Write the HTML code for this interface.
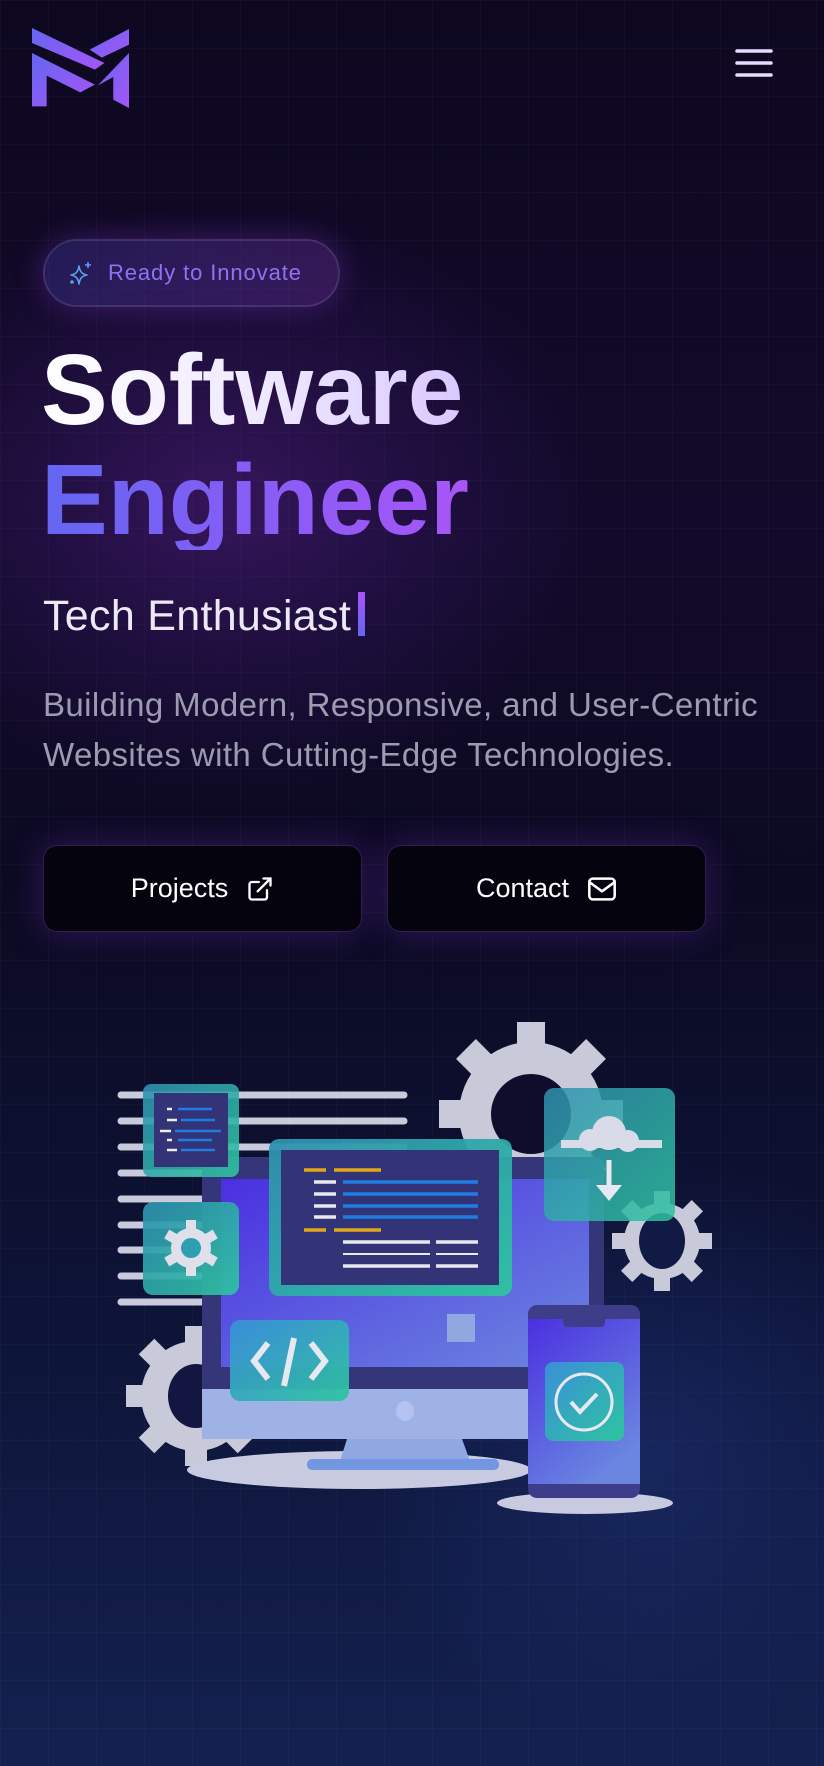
<!DOCTYPE html>
<html><head><meta charset="utf-8"><style>
*{margin:0;padding:0;box-sizing:border-box}
html,body{width:824px;height:1766px;overflow:hidden}
body{position:relative;font-family:"Liberation Sans",sans-serif;
background:linear-gradient(180deg,#0d0820 0%,#120a2a 30%,#0c0a22 50%,#0d1438 75%,#14214f 100%);}
.grid{position:absolute;inset:0;background-image:linear-gradient(rgba(255,255,255,0.022) 1px,transparent 1px),linear-gradient(90deg,rgba(255,255,255,0.022) 1px,transparent 1px);background-size:48px 48px;background-position:0 0}
.glow{position:absolute;left:-150px;top:200px;width:750px;height:600px;background:radial-gradient(ellipse at center,rgba(110,40,170,0.38) 0%,rgba(80,30,140,0.2) 40%,transparent 70%)}
.glow2{position:absolute;left:350px;top:1150px;width:600px;height:600px;background:radial-gradient(ellipse at center,rgba(40,70,160,0.3),transparent 70%)}
.abs{position:absolute;white-space:nowrap}
.badge{left:43px;top:239px;width:297px;height:68px;border-radius:34px;border:2px solid rgba(255,255,255,0.1);background:linear-gradient(90deg,rgba(70,60,170,0.35),rgba(110,50,160,0.35));box-shadow:0 0 30px rgba(140,60,220,0.35)}
.badge span{position:absolute;left:63px;top:19px;font-size:22px;letter-spacing:0.9px;color:#8f72f3}
.h1{font-weight:bold;font-size:100px;line-height:100px;letter-spacing:0px}
.sw{left:41px;top:340px;background:linear-gradient(90deg,#ffffff,#f0eaff 50%,#d9c8ff);-webkit-background-clip:text;background-clip:text;color:transparent}
.en{left:41px;top:450px;background:linear-gradient(90deg,#6366f1,#8b5cf6 55%,#a855f7);-webkit-background-clip:text;background-clip:text;color:transparent}
.tech{left:43px;top:595px;font-size:43px;line-height:42px;letter-spacing:0.3px;color:#ece8f5}
.cur{position:absolute;left:358px;top:592px;width:7px;height:44px;background:linear-gradient(#a855f7,#6366f1)}
.para{left:43px;top:680px;font-size:33px;line-height:50px;letter-spacing:0.4px;color:#9c9bb0}
.btn{position:absolute;top:845px;height:87px;width:319px;border-radius:14px;background:#05030d;border:1.5px solid rgba(120,90,200,0.35);box-shadow:0 0 35px rgba(120,50,200,0.35);color:#fff;font-size:27px;display:flex;align-items:center;justify-content:center;gap:18px}
</style></head><body>
<div class="grid"></div>
<div class="glow"></div>
<div class="glow2"></div>

<svg class="abs" style="left:32px;top:28px" width="97" height="80" viewBox="60 85 185 240" preserveAspectRatio="none">
<defs><linearGradient id="lg" x1="0" y1="0" x2="1" y2="1"><stop offset="0" stop-color="#6366f1"/><stop offset="1" stop-color="#a855f7"/></linearGradient></defs>
<polygon fill="url(#lg)" points="60,85 198,190 180,210 60,130"/>
<polygon fill="url(#lg)" points="170,150 245,88 245,135 193,174"/>
<polygon fill="url(#lg)" points="60,160 180,255 152,278 88,228 88,320 60,320"/>
<polygon fill="url(#lg)" points="185,258 245,160 245,325 215,300 215,232"/>
</svg>

<svg class="abs" style="left:735px;top:48px" width="38" height="32" viewBox="0 0 38 32">
<g stroke="#e6dcff" stroke-width="3.5" stroke-linecap="round"><line x1="2" y1="3" x2="36" y2="3"/><line x1="2" y1="15" x2="36" y2="15"/><line x1="2" y1="27" x2="36" y2="27"/></g></svg>

<div class="abs badge">
<svg style="position:absolute;left:24px;top:20px" width="24" height="26" viewBox="0 0 24 26" fill="none" stroke="#5aa0f0" stroke-width="1.6" stroke-linejoin="round">
<path d="M10 5 C11 11 13 13 18 14 C13 15 11 17 10 23 C9 17 7 15 2 14 C7 13 9 11 10 5Z"/>
<path d="M19 1v6M16 4h6"/><circle cx="3" cy="21" r="1" fill="#5aa0f0"/></svg>
<span>Ready to Innovate</span></div>

<div class="abs h1 sw">Software</div>
<div class="abs h1 en">Engineer</div>
<div class="abs tech">Tech Enthusiast</div>
<div class="cur"></div>
<div class="abs para">Building Modern, Responsive, and User-Centric<br>Websites with Cutting-Edge Technologies.</div>

<div class="btn" style="left:43px">Projects
<svg width="28" height="28" viewBox="0 0 24 24" fill="none" stroke="#fff" stroke-width="2" stroke-linecap="round" stroke-linejoin="round"><path d="M18 13v6a2 2 0 0 1-2 2H5a2 2 0 0 1-2-2V8a2 2 0 0 1 2-2h6"/><path d="M15 3h6v6"/><path d="M10 14L21 3"/></svg></div>
<div class="btn" style="left:387px">Contact
<svg width="30" height="26" viewBox="0 0 26 22" fill="none" stroke="#fff" stroke-width="2.2" stroke-linejoin="round"><rect x="2" y="2" width="22" height="18" rx="3"/><path d="M2 5l11 8 11-8"/></svg></div>

<svg class="abs" style="left:0;top:1000px" width="824" height="540" viewBox="0 1000 824 540">
<defs>
<linearGradient id="scr" x1="0" y1="0" x2="1" y2="1"><stop offset="0" stop-color="#4a30e0"/><stop offset="1" stop-color="#6c86e0"/></linearGradient>
<linearGradient id="teal" x1="0" y1="0" x2="1" y2="1"><stop offset="0" stop-color="#2f8fb0"/><stop offset="1" stop-color="#2ec4a0"/></linearGradient>
<linearGradient id="teal2" x1="0" y1="0" x2="1" y2="1"><stop offset="0" stop-color="#3a8fd8"/><stop offset="1" stop-color="#2ec4a0"/></linearGradient>
<linearGradient id="ph" x1="0" y1="0" x2="0.6" y2="1"><stop offset="0" stop-color="#4b30e0"/><stop offset="1" stop-color="#6a86e0"/></linearGradient>
</defs>
<g stroke="#c9cadb" stroke-width="7" stroke-linecap="round">
<line x1="121" y1="1095" x2="404" y2="1095"/><line x1="121" y1="1121" x2="404" y2="1121"/>
<line x1="121" y1="1147" x2="404" y2="1147"/><line x1="121" y1="1173" x2="220" y2="1173"/>
<line x1="121" y1="1199" x2="220" y2="1199"/><line x1="121" y1="1225" x2="220" y2="1225"/>
<line x1="121" y1="1250" x2="220" y2="1250"/><line x1="121" y1="1276" x2="220" y2="1276"/>
<line x1="121" y1="1302" x2="220" y2="1302"/></g>
<g fill="#c8c9d9">
<g transform="translate(531,1114)"><circle r="72"/>
<g><rect x="-14" y="-92" width="28" height="30"/><rect x="-14" y="-92" width="28" height="30" transform="rotate(45)"/><rect x="-14" y="-92" width="28" height="30" transform="rotate(90)"/><rect x="-14" y="-92" width="28" height="30" transform="rotate(135)"/><rect x="-14" y="-92" width="28" height="30" transform="rotate(180)"/><rect x="-14" y="-92" width="28" height="30" transform="rotate(225)"/><rect x="-14" y="-92" width="28" height="30" transform="rotate(270)"/><rect x="-14" y="-92" width="28" height="30" transform="rotate(315)"/></g>
<ellipse rx="40" ry="40" fill="#0f0c2c"/></g>
<g transform="translate(662,1241)"><circle r="38"/>
<g><rect x="-8" y="-50" width="16" height="16"/><rect x="-8" y="-50" width="16" height="16" transform="rotate(45)"/><rect x="-8" y="-50" width="16" height="16" transform="rotate(90)"/><rect x="-8" y="-50" width="16" height="16" transform="rotate(135)"/><rect x="-8" y="-50" width="16" height="16" transform="rotate(180)"/><rect x="-8" y="-50" width="16" height="16" transform="rotate(225)"/><rect x="-8" y="-50" width="16" height="16" transform="rotate(270)"/><rect x="-8" y="-50" width="16" height="16" transform="rotate(315)"/></g>
<ellipse rx="23" ry="28" fill="#111a44"/></g>
<g transform="translate(196,1396)"><circle r="55"/>
<g><rect x="-11" y="-70" width="22" height="20"/><rect x="-11" y="-70" width="22" height="20" transform="rotate(45)"/><rect x="-11" y="-70" width="22" height="20" transform="rotate(90)"/><rect x="-11" y="-70" width="22" height="20" transform="rotate(135)"/><rect x="-11" y="-70" width="22" height="20" transform="rotate(180)"/><rect x="-11" y="-70" width="22" height="20" transform="rotate(225)"/><rect x="-11" y="-70" width="22" height="20" transform="rotate(270)"/><rect x="-11" y="-70" width="22" height="20" transform="rotate(315)"/></g>
<ellipse rx="28" ry="32" fill="#121640"/></g>
</g>
<ellipse cx="359" cy="1470" rx="172" ry="19" fill="#c8cbe0"/>
<ellipse cx="585" cy="1503" rx="88" ry="11" fill="#c8cbe0"/>
<rect x="202" y="1157" width="402" height="282" rx="8" fill="#35357a"/>
<rect x="221" y="1179" width="368" height="188" fill="url(#scr)"/>
<rect x="202" y="1389" width="402" height="50" fill="#9fb2e6"/>
<ellipse cx="405" cy="1411" rx="9" ry="10" fill="#b3c2ee"/>
<polygon points="347,1439 462,1439 470,1461 340,1461" fill="#8fa8e2"/>
<rect x="307" y="1459" width="192" height="11" rx="5" fill="#7396e0"/>
<rect x="447" y="1314" width="28" height="28" fill="#8fa8e0"/>
<rect x="269" y="1139" width="243" height="157" rx="10" fill="url(#teal)" opacity="0.95"/>
<rect x="281" y="1150" width="218" height="135" fill="#333377"/>
<g stroke-width="3.5">
<line x1="304" y1="1170" x2="326" y2="1170" stroke="#e0a818"/><line x1="334" y1="1170" x2="381" y2="1170" stroke="#e0a818"/>
<line x1="314" y1="1182" x2="336" y2="1182" stroke="#e8e8f0"/><line x1="343" y1="1182" x2="478" y2="1182" stroke="#1e7ee0"/>
<line x1="314" y1="1194" x2="336" y2="1194" stroke="#e8e8f0"/><line x1="343" y1="1194" x2="478" y2="1194" stroke="#1e7ee0"/>
<line x1="314" y1="1206" x2="336" y2="1206" stroke="#e8e8f0"/><line x1="343" y1="1206" x2="478" y2="1206" stroke="#1e7ee0"/>
<line x1="314" y1="1217" x2="336" y2="1217" stroke="#e8e8f0"/><line x1="343" y1="1217" x2="478" y2="1217" stroke="#1e7ee0"/>
<line x1="304" y1="1230" x2="326" y2="1230" stroke="#e0a818"/><line x1="334" y1="1230" x2="381" y2="1230" stroke="#e0a818"/>
<line x1="343" y1="1242" x2="430" y2="1242" stroke="#e8e8f0"/><line x1="436" y1="1242" x2="478" y2="1242" stroke="#e8e8f0"/>
<line x1="343" y1="1254" x2="430" y2="1254" stroke="#e8e8f0" stroke-width="2"/><line x1="436" y1="1254" x2="478" y2="1254" stroke="#e8e8f0" stroke-width="2"/>
<line x1="343" y1="1266" x2="430" y2="1266" stroke="#e8e8f0"/><line x1="436" y1="1266" x2="478" y2="1266" stroke="#e8e8f0"/>
</g>
<rect x="143" y="1084" width="96" height="93" rx="8" fill="url(#teal)" opacity="0.9"/>
<rect x="154" y="1093" width="74" height="74" fill="#333377"/>
<g stroke-width="2.5"><line x1="167" y1="1109" x2="172" y2="1109" stroke="#eee"/><line x1="178" y1="1109" x2="212" y2="1109" stroke="#1e7ee0"/>
<line x1="167" y1="1120" x2="177" y2="1120" stroke="#eee"/><line x1="181" y1="1120" x2="215" y2="1120" stroke="#1e7ee0"/>
<line x1="160" y1="1131" x2="171" y2="1131" stroke="#eee"/><line x1="175" y1="1131" x2="221" y2="1131" stroke="#1e7ee0"/>
<line x1="167" y1="1140" x2="172" y2="1140" stroke="#eee"/><line x1="178" y1="1140" x2="212" y2="1140" stroke="#1e7ee0"/>
<line x1="167" y1="1150" x2="177" y2="1150" stroke="#eee"/><line x1="181" y1="1150" x2="215" y2="1150" stroke="#1e7ee0"/></g>
<rect x="143" y="1202" width="96" height="93" rx="10" fill="url(#teal)" opacity="0.92"/>
<g transform="translate(191,1248)" fill="#dfe0ea"><circle r="20"/>
<rect x="-5" y="-28" width="10" height="10"/><rect x="-5" y="-28" width="10" height="10" transform="rotate(60)"/><rect x="-5" y="-28" width="10" height="10" transform="rotate(120)"/><rect x="-5" y="-28" width="10" height="10" transform="rotate(180)"/><rect x="-5" y="-28" width="10" height="10" transform="rotate(240)"/><rect x="-5" y="-28" width="10" height="10" transform="rotate(300)"/>
<circle r="10" fill="#2e9fb0"/></g>
<rect x="230" y="1320" width="119" height="81" rx="10" fill="url(#teal2)" opacity="0.95"/>
<g fill="none" stroke="#e8e8f0" stroke-width="6"><path d="M268 1343l-14 18 14 18"/><path d="M311 1343l14 18-14 18"/><path d="M294 1338l-10 48"/></g>
<rect x="544" y="1088" width="131" height="133" rx="10" fill="url(#teal)" opacity="0.85"/>
<g fill="#d9dbe8"><circle cx="609" cy="1133" r="17"/><circle cx="590" cy="1140" r="11"/><circle cx="628" cy="1141" r="11"/><rect x="561" y="1140" width="101" height="8"/></g>
<path d="M609 1160v30" stroke="#e8e8f0" stroke-width="5"/><polygon points="596,1185 622,1185 609,1201" fill="#e8e8f0"/>
<rect x="528" y="1305" width="112" height="193" rx="9" fill="#3d3d8a"/>
<rect x="528" y="1319" width="112" height="165" fill="url(#ph)"/>
<path d="M563 1319h42v4a4 4 0 0 1-4 4h-34a4 4 0 0 1-4-4z" fill="#3d3d8a"/>
<rect x="545" y="1362" width="79" height="79" rx="8" fill="url(#teal2)"/>
<circle cx="584" cy="1402" r="28" fill="none" stroke="#e8e8f0" stroke-width="3"/>
<path d="M571 1402l9 10 17-18" fill="none" stroke="#e8e8f0" stroke-width="4"/>
</svg>
</body></html>
